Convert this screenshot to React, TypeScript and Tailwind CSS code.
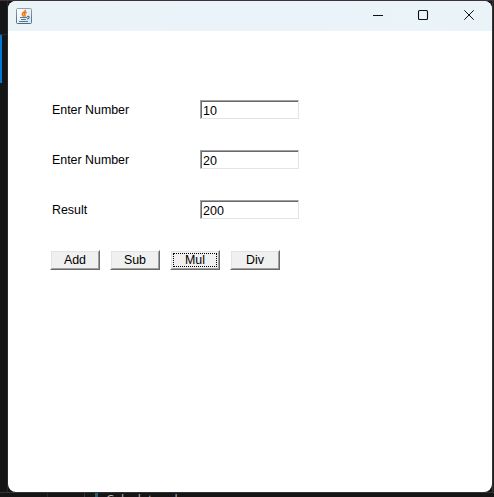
import React from 'react';

function JavaIcon() {
  return (
    <svg width="16" height="16" viewBox="0 0 16 16" fill="none" className="block">
      <defs>
        <linearGradient id="edge" x1="0" y1="0" x2="0" y2="1">
          <stop offset="0" stopColor="#8ba2b1" />
          <stop offset="1" stopColor="#426f91" />
        </linearGradient>
        <linearGradient id="face" x1="0" y1="0" x2="1" y2="1">
          <stop offset="0" stopColor="#ffffff" />
          <stop offset="1" stopColor="#dce2e6" />
        </linearGradient>
      </defs>
      <rect x=".5" y=".5" width="15" height="15" rx="1" fill="url(#face)" stroke="url(#edge)" />
      <path d="M9.4 1.8C10 3.8 6.1 4.5 6.3 6.2C6.4 7.1 7.2 7.7 7.8 8.6M10.8 4.2C8.2 5.2 8.2 6.2 8.9 7C9.3 7.6 9 8.2 8.6 8.6" stroke="#ee7d18" strokeWidth="1.6" />
      <path d="M4 9.5H11M5 11.5H10M3 13.5H12M11 8.6C13.9 7.6 14.1 10.4 11 11.2" stroke="#4d7898" strokeWidth="1.2" />
    </svg>
  );
}

function Field({ value }: { value: string }) {
  return (
    <div className="h-[19px] w-[99px] border border-t-[#a0a0a0] border-l-[#a0a0a0] border-r-[#e3e3e3] border-b-[#e3e3e3]">
      <input
        readOnly
        value={value}
        className="block h-[17px] w-full border-t border-l border-[#696969] bg-white pt-[2px] pl-px text-[12.5px] leading-[14px] outline-none"
      />
    </div>
  );
}

function Row({ label, value }: { label: string; value: string }) {
  return (
    <div className="flex h-[50px] items-start">
      <label className="w-[150px] pt-[3px] pl-[2px] text-[12.4px] leading-[14px]">{label}</label>
      <Field value={value} />
    </div>
  );
}

function PushButton({ text, focused = false }: { text: string; focused?: boolean }) {
  return (
    <button className="h-5 w-[50px] border border-t-white border-l-white border-r-[#696969] border-b-[#696969]">
      <span className="flex h-full w-full border border-t-[#e3e3e3] border-l-[#e3e3e3] border-r-[#a0a0a0] border-b-[#a0a0a0] bg-[#f0f0f0] p-px">
        <span className={`flex flex-1 items-center justify-center border text-[12.4px] leading-[14px] ${focused ? 'border-dotted border-black' : 'border-transparent'}`}>
          {text}
        </span>
      </span>
    </button>
  );
}

export default function App() {
  return (
    <div className="flex h-[497px] w-[494px] flex-col overflow-hidden bg-[#151515] font-['Liberation_Sans',Arial,sans-serif] text-black">
      <div className="h-px shrink-0 bg-[#3d333c]" />
      <div className="flex h-[491px] shrink-0">
        <div className="w-[7px] pt-[33px]">
          <div className="h-px bg-[#2b2b2b]" />
          <div className="h-12 w-[2px] bg-[#0078d4]" />
        </div>
        <div className="w-px bg-[#29292b]" />
        <main className="w-[484px] overflow-hidden rounded-[8px] bg-white">
          <header className="flex h-[30px] items-center justify-between bg-linear-to-r from-[#eaf4f7] via-[#eaf3fa] to-[#eaf4f8] pl-2">
            <JavaIcon />
            <svg width="138" height="30" fill="none" stroke="#111" className="block">
              <path d="M19 14.5H29" />
              <rect x="64.5" y="9.5" width="9" height="9" rx="1" strokeWidth="1.1" />
              <path d="M110.3 9.3L119.7 18.7M119.7 9.3L110.3 18.7" strokeWidth="1" />
            </svg>
          </header>
          <div className="pt-[69px] pl-[42px]">
            <Row label="Enter Number" value="10" />
            <Row label="Enter Number" value="20" />
            <Row label="Result" value="200" />
            <div className="flex gap-[10px]">
              <PushButton text="Add" />
              <PushButton text="Sub" />
              <PushButton text="Mul" focused />
              <PushButton text="Div" />
            </div>
          </div>
        </main>
        <div className="w-[2px] border-l border-[#343434] bg-[#202020]" />
      </div>
      <div className="h-px shrink-0 bg-[#343434]" />
      <div className="flex h-1 shrink-0 overflow-hidden">
        <div className="w-[48px] border-r border-[#292929]" />
        <div className="w-[37px] border-r border-[#393939]" />
        <div className="ml-[10px] h-1 w-[3px] bg-[#245c70]" />
        <span className="ml-[8px] font-['Open_Sans',sans-serif] text-[12.6px] leading-[14px] text-[#b0b0b0]">Calculator.class</span>
      </div>
    </div>
  );
}
